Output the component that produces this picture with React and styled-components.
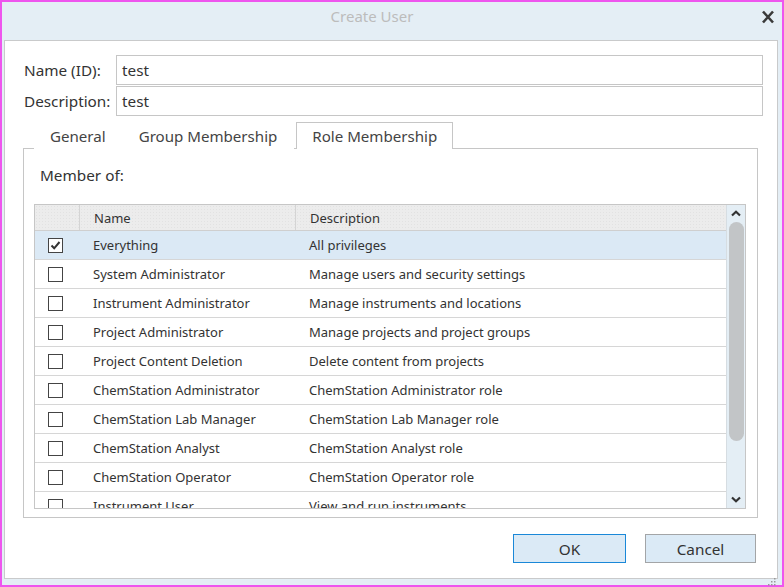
import React from "react";
import styled, { createGlobalStyle } from "styled-components";

const GlobalStyle = createGlobalStyle`
  html, body { margin: 0; padding: 0; }
  body { font-family: "Noto Sans", "Open Sans", sans-serif; color: #333; }
`;

const roles = [
  ["Everything", "All privileges", true],
  ["System Administrator", "Manage users and security settings"],
  ["Instrument Administrator", "Manage instruments and locations"],
  ["Project Administrator", "Manage projects and project groups"],
  ["Project Content Deletion", "Delete content from projects"],
  ["ChemStation Administrator", "ChemStation Administrator role"],
  ["ChemStation Lab Manager", "ChemStation Lab Manager role"],
  ["ChemStation Analyst", "ChemStation Analyst role"],
  ["ChemStation Operator", "ChemStation Operator role"],
  ["Instrument User", "View and run instruments"],
];

// 바깥 창
const Window = styled.div`
  width: 784px;
  height: 587px;
  box-sizing: border-box;
  border: 2px solid #ee55ee;
  background: #e4eef5;
  display: flex;
  flex-direction: column;
`;

const TitleBar = styled.div`
  height: 38px;
  display: flex;
  align-items: center;
  justify-content: center;
  padding-right: 40px;
  position: relative;
  flex-shrink: 0;
`;

const Title = styled.div`
  font-size: 15px;
  color: #bcbcbc;
  margin-top: -10px;
`;

const Close = styled.div`
  position: absolute;
  right: 6px;
  top: 6px;
  width: 16px;
  height: 16px;
`;

const Body = styled.div`
  margin: 0 4px 0 2px;
  height: 539px;
  background: #fff;
  border: 1px solid #c9cacb;
  box-sizing: border-box;
  padding: 14px 14px 0 19px;
  display: flex;
  flex-direction: column;
  position: relative;
`;

const FieldRow = styled.div`
  display: flex;
  align-items: center;
  height: 30px;
  margin-bottom: 1px;
`;

const Label = styled.div`
  width: 92px;
  font-size: 15.3px;
  color: #333;
`;

const Input = styled.div`
  flex: 1;
  height: 30px;
  box-sizing: border-box;
  border: 1px solid #c6c6c6;
  padding: 0 5px;
  display: flex;
  align-items: center;
  font-size: 15.3px;
  color: #333;
`;

const TabStrip = styled.div`
  display: flex;
  align-items: flex-end;
  height: 31px;
  padding-left: 10px;
`;

const Tab = styled.div`
  height: 27px;
  box-sizing: border-box;
  padding: 0 ${(p) => p.$pad}px 1px;
  margin-left: ${(p) => p.$gap || 0}px;
  font-size: 15.1px;
  color: #444;
  display: flex;
  align-items: center;
  border: 1px solid ${(p) => (p.$active ? "#c6c6c6" : "transparent")};
  border-bottom: none;
  background: #fff;
  position: relative;
  top: 1px;
  z-index: 1;
`;

const TabPanel = styled.div`
  margin-left: -1px;
  width: 735px;
  height: 370px;
  box-sizing: border-box;
  border: 1px solid #c6c6c6;
  padding: 16px 10px 0 10px;
`;

const MemberLabel = styled.div`
  font-size: 15.3px;
  color: #333;
  margin-left: 6px;
  height: 39px;
`;

const Table = styled.div`
  width: 712px;
  height: 305px;
  box-sizing: border-box;
  border: 1px solid #c6c6c6;
  display: flex;
  overflow: hidden;
`;

const Grid = styled.div`
  flex: 1;
  display: flex;
  flex-direction: column;
`;

const Row = styled.div`
  display: grid;
  grid-template-columns: 44px 216px 1fr;
  height: 29px;
  flex-shrink: 0;
  box-sizing: border-box;
  border-bottom: 1px solid #d6d6d6;
  background: ${(p) => (p.$selected ? "#dbe9f5" : "#fff")};
  font-size: 13px;
  color: #333;
`;

const HeaderRow = styled(Row)`
  height: 26px;
  background-color: #ececec;
  background-image: radial-gradient(#e2e2e2 0.6px, transparent 0.6px);
  background-size: 3px 3px;
  border-bottom: 1px solid #cfcfcf;
`;

const Cell = styled.div`
  display: flex;
  align-items: center;
  padding-left: ${(p) => p.$pad || 14}px;
  border-left: ${(p) => (p.$sep ? "1px solid #d4d4d4" : "none")};
  white-space: nowrap;
`;

const Check = styled.div`
  width: 15px;
  height: 15px;
  box-sizing: border-box;
  border: 1px solid #444;
  background: #fff;
  display: flex;
  align-items: center;
  justify-content: center;
`;

const Scrollbar = styled.div`
  width: 18px;
  background: #e4eef5;
  border-left: 1px solid #d6dde2;
  display: flex;
  flex-direction: column;
  align-items: center;
`;

const Arrow = styled.div`
  height: 17px;
  display: flex;
  align-items: center;
  justify-content: center;
`;

const Thumb = styled.div`
  width: 15px;
  height: 219px;
  border-radius: 8px;
  background: #c2c5c7;
`;

const Spacer = styled.div`
  flex: 1;
`;

const Footer = styled.div`
  display: flex;
  justify-content: flex-end;
  gap: 19px;
  margin-top: 16px;
  padding-right: 7px;
`;

const Button = styled.div`
  width: ${(p) => (p.$primary ? 113 : 111)}px;
  height: 29px;
  box-sizing: border-box;
  border: 1px solid ${(p) => (p.$primary ? "#1a88d8" : "#a3a5a7")};
  background: #dbeaf6;
  display: flex;
  align-items: center;
  justify-content: center;
  font-size: 15.3px;
  color: #333;
`;

const Grip = styled.div`
  position: absolute;
  right: 1px;
  bottom: 1px;
  width: 8px;
  height: 8px;
`;

const CheckBox = ({ checked }) => (
  <Check>
    {checked && (
      <svg width="11" height="11" viewBox="0 0 11 11">
        <path d="M1.5 5.5 L4.2 8.3 L9.5 2" stroke="#333" strokeWidth="2" fill="none" />
      </svg>
    )}
  </Check>
);

const App = () => (
  <>
    <GlobalStyle />
    <Window>
      <TitleBar>
        <Title>Create User</Title>
        <Close>
          <svg width="16" height="16" viewBox="0 0 16 16">
            <path d="M3 2.5 L13 13.5 M13 2.5 L3 13.5" stroke="#3a3a3a" strokeWidth="2.6" />
          </svg>
        </Close>
      </TitleBar>
      <Body>
        <FieldRow>
          <Label>Name (ID):</Label>
          <Input>test</Input>
        </FieldRow>
        <FieldRow>
          <Label>Description:</Label>
          <Input>test</Input>
        </FieldRow>
        <TabStrip>
          <Tab $pad={15}>General</Tab>
          <Tab $pad={16}>Group Membership</Tab>
          <Tab $pad={15} $gap={2} $active>Role Membership</Tab>
        </TabStrip>
        <TabPanel>
          <MemberLabel>Member of:</MemberLabel>
          <Table>
            <Grid>
              <HeaderRow>
                <Cell />
                <Cell $sep>Name</Cell>
                <Cell $sep>Description</Cell>
              </HeaderRow>
              {roles.map(([name, desc, checked]) => (
                <Row key={name} $selected={checked}>
                  <Cell $pad={13}>
                    <CheckBox checked={checked} />
                  </Cell>
                  <Cell>{name}</Cell>
                  <Cell>{desc}</Cell>
                </Row>
              ))}
            </Grid>
            <Scrollbar>
              <Arrow>
                <svg width="10" height="7" viewBox="0 0 10 7">
                  <path d="M1 5.5 L5 1.8 L9 5.5" stroke="#333" strokeWidth="2.2" fill="none" />
                </svg>
              </Arrow>
              <Thumb />
              <Spacer />
              <Arrow>
                <svg width="10" height="7" viewBox="0 0 10 7">
                  <path d="M1 1.5 L5 5.2 L9 1.5" stroke="#333" strokeWidth="2.2" fill="none" />
                </svg>
              </Arrow>
            </Scrollbar>
          </Table>
        </TabPanel>
        <Footer>
          <Button $primary>OK</Button>
          <Button>Cancel</Button>
        </Footer>
        <Grip>
          <svg width="8" height="8" viewBox="0 0 8 8">
            <rect x="6" y="0" width="1.5" height="1.5" fill="#999" />
            <rect x="3" y="3" width="1.5" height="1.5" fill="#999" />
            <rect x="6" y="3" width="1.5" height="1.5" fill="#999" />
            <rect x="0" y="6" width="1.5" height="1.5" fill="#999" />
            <rect x="3" y="6" width="1.5" height="1.5" fill="#999" />
            <rect x="6" y="6" width="1.5" height="1.5" fill="#999" />
          </svg>
        </Grip>
      </Body>
    </Window>
  </>
);

export default App;
